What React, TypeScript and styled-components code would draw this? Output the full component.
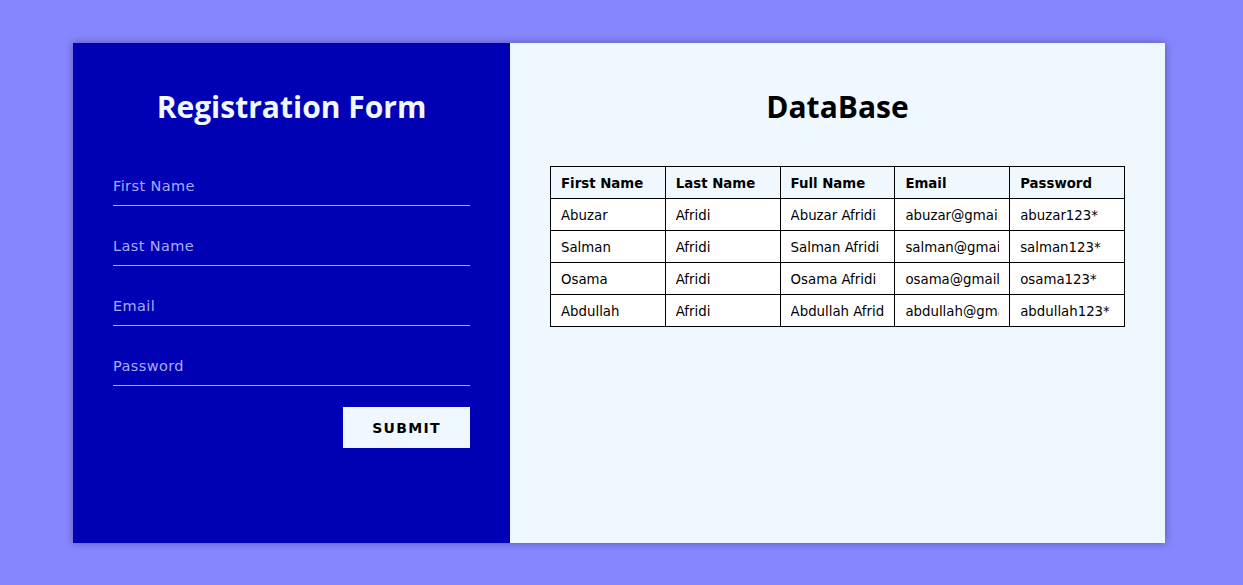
import styled, { createGlobalStyle } from "styled-components";

const GlobalStyle = createGlobalStyle`
    body {
        margin: 0;
        background-color: #8686ff;
        font-family: "DejaVu Sans", "Noto Sans", sans-serif;
    }
`

const Page = styled.div`
    width: 100%;
    height: 585px;
    display: flex;
    padding: 43px 0 0 73px;
    box-sizing: border-box;
`

const Card = styled.div`
    width: 1092px;
    height: 500px;
    display: flex;
    box-shadow: 0 0 8px rgba(0, 0, 0, 0.35);
`

const FormPanel = styled.form`
    width: 437px;
    background-color: #0000b4;
    padding: 0 40px;
    box-sizing: border-box;
    display: flex;
    flex-direction: column;
`

const DataPanel = styled.div`
    flex: 1;
    background-color: aliceblue;
    padding: 0 40px;
    box-sizing: border-box;
`

const Title = styled.h1<{ $light?: boolean }>`
    margin: 0;
    padding-top: 43px;
    height: 123px;
    box-sizing: border-box;
    text-align: center;
    font-family: "Open Sans", "Noto Sans", sans-serif;
    font-size: 30px;
    font-weight: 700;
    color: ${props => (props.$light ? "aliceblue" : "#000")};
`

const Field = styled.input`
    display: block;
    width: 100%;
    height: 40px;
    margin-top: 20px;
    padding: 0;
    border: none;
    border-bottom: 1px solid #a9abff;
    background: transparent;
    color: aliceblue;
    font-family: "DejaVu Sans", sans-serif;
    font-size: 14.5px;
    letter-spacing: 0.4px;
    outline: none;
    box-sizing: border-box;

    &::placeholder {
        color: #a9abff;
    }

    &:first-of-type {
        margin-top: 0;
    }
`

const SubmitRow = styled.div`
    display: flex;
    justify-content: flex-end;
    margin-top: 21px;
`

const SubmitButton = styled.button`
    width: 127px;
    height: 41px;
    border: none;
    background-color: aliceblue;
    color: #000;
    font-family: "DejaVu Sans", sans-serif;
    font-size: 14px;
    font-weight: 700;
    letter-spacing: 1.3px;
    cursor: pointer;
`

const Table = styled.table`
    width: 100%;
    border-collapse: collapse;
    table-layout: fixed;
    font-family: "DejaVu Sans Condensed", "DejaVu Sans", sans-serif;
    font-size: 14.8px;
`

const HeadCell = styled.th`
    height: 32px;
    border: 1px solid #000;
    padding: 0 10px;
    text-align: left;
    font-weight: 700;
    background-color: aliceblue;
    box-sizing: border-box;
`

const Cell = styled.td`
    height: 32px;
    border: 1px solid #000;
    padding: 0 10px;
    background-color: #fff;
    box-sizing: border-box;
`

const CellText = styled.div`
    white-space: nowrap;
    overflow: hidden;
`

const users = [
    { first: "Abuzar", last: "Afridi", email: "abuzar@gmail.com", password: "abuzar123*" },
    { first: "Salman", last: "Afridi", email: "salman@gmail.com", password: "salman123*" },
    { first: "Osama", last: "Afridi", email: "osama@gmail.com", password: "osama123*" },
    { first: "Abdullah", last: "Afridi", email: "abdullah@gmail.com", password: "abdullah123*" },
];

const headings = ["First Name", "Last Name", "Full Name", "Email", "Password"];

export default function App() {
    return (
        <>
            <GlobalStyle />
            <Page>
                <Card>
                    <FormPanel onSubmit={e => e.preventDefault()}>
                        <Title $light>Registration Form</Title>
                        <Field type="text" placeholder="First Name" />
                        <Field type="text" placeholder="Last Name" />
                        <Field type="email" placeholder="Email" />
                        <Field type="password" placeholder="Password" />
                        <SubmitRow>
                            <SubmitButton type="submit">SUBMIT</SubmitButton>
                        </SubmitRow>
                    </FormPanel>
                    <DataPanel>
                        <Title>DataBase</Title>
                        <Table>
                            <thead>
                                <tr>
                                    {headings.map(h => (
                                        <HeadCell key={h}><CellText>{h}</CellText></HeadCell>
                                    ))}
                                </tr>
                            </thead>
                            <tbody>
                                {users.map(u => (
                                    <tr key={u.email}>
                                        <Cell><CellText>{u.first}</CellText></Cell>
                                        <Cell><CellText>{u.last}</CellText></Cell>
                                        <Cell><CellText>{u.first} {u.last}</CellText></Cell>
                                        <Cell><CellText>{u.email}</CellText></Cell>
                                        <Cell><CellText>{u.password}</CellText></Cell>
                                    </tr>
                                ))}
                            </tbody>
                        </Table>
                    </DataPanel>
                </Card>
            </Page>
        </>
    )
}
